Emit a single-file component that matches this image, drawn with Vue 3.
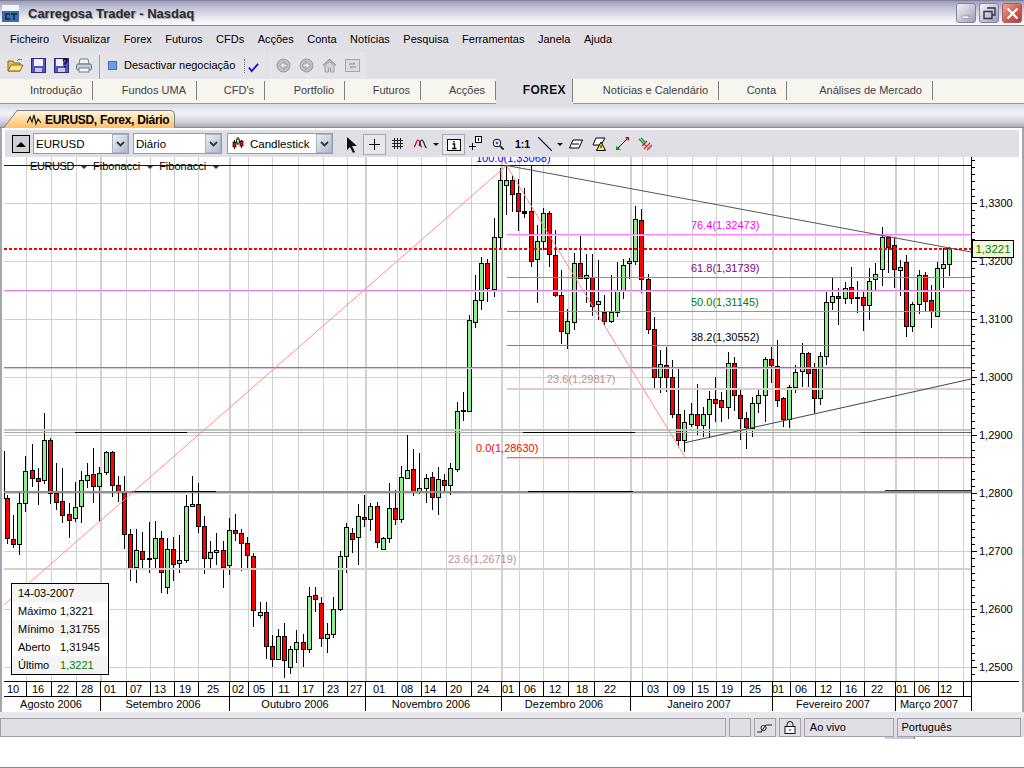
<script setup>
const menus = ['Ficheiro', 'Visualizar', 'Forex', 'Futuros', 'CFDs', 'Acções', 'Conta', 'Notícias', 'Pesquisa', 'Ferramentas', 'Janela', 'Ajuda']

const tabs = [
  { label: 'Introdução', w: 93 },
  { label: 'Fundos UMA', w: 104 },
  { label: "CFD's", w: 68 },
  { label: 'Portfolio', w: 80 },
  { label: 'Futuros', w: 76 },
  { label: 'Acções', w: 75 },
  { label: 'FOREX', w: 77, active: true },
  { label: 'Notícias e Calendário', w: 146 },
  { label: 'Conta', w: 68 },
  { label: 'Análises de Mercado', w: 146 }
]

const combos = [
  { label: 'EURUSD', w: 96 },
  { label: 'Diário', w: 89 },
  { label: 'Candlestick', w: 106, icon: true }
]

const legend = [
  { k: '14-03-2007', v: '' },
  { k: 'Máximo', v: '1,3221' },
  { k: 'Mínimo', v: '1,31755' },
  { k: 'Aberto', v: '1,31945' },
  { k: 'Último', v: '1,3221', up: true }
]

// candles read off the chart, rows are [x, high, top, bottom, low, colour]
const scale = (ox, oy, rows) => rows.map(r => [ox + r[0] / 3, oy + r[1] / 3, oy + r[2] / 3, oy + r[3] / 3, oy + r[4] / 3, r[5]])

const candles = [
  ...scale(0, 410, [
    [22, 255, 265, 385, 402, 'R'], [40, 315, 387, 403, 413, 'R'], [58, 245, 280, 403, 435, 'G'], [76, 138, 184, 280, 305, 'G'],
    [97, 102, 181, 205, 230, 'R'], [115, 175, 205, 212, 285, 'R'], [133, 10, 91, 211, 222, 'G'], [151, 85, 91, 250, 282, 'R'],
    [169, 160, 250, 275, 300, 'R'], [187, 175, 274, 316, 338, 'R'], [207, 280, 313, 331, 383, 'R'], [226, 215, 290, 325, 335, 'G'],
    [244, 183, 211, 289, 338, 'G'], [262, 160, 196, 211, 233, 'G'], [280, 115, 193, 229, 278, 'R'], [298, 170, 190, 229, 335, 'G'],
    [319, 123, 127, 187, 195, 'G'], [337, 123, 127, 226, 260, 'R'], [355, 197, 224, 243, 275, 'R'], [373, 198, 245, 373, 417, 'R'],
    [391, 358, 373, 473, 512, 'R'], [409, 358, 421, 472, 518, 'G'], [427, 366, 424, 448, 475, 'R'], [447, 335, 445, 448, 488, 'K'],
    [466, 333, 385, 445, 473, 'G'], [484, 363, 385, 487, 548, 'R'], [502, 385, 418, 532, 552, 'G'], [520, 380, 418, 463, 512, 'R'],
    [538, 375, 451, 460, 488, 'G'], [558, 255, 289, 451, 458, 'G'], [577, 198, 283, 289, 292, 'G'], [595, 220, 283, 349, 370, 'R'],
    [613, 318, 349, 445, 491, 'R'], [631, 393, 427, 445, 479, 'G'], [649, 370, 421, 427, 466, 'G'], [670, 392, 421, 472, 533, 'R'],
    [688, 325, 361, 464, 494, 'G'], [706, 313, 361, 370, 393, 'R'], [724, 358, 370, 400, 482, 'R'], [742, 380, 400, 436, 478, 'R'],
    [760, 430, 439, 601, 650, 'R'], [781, 577, 607, 616, 625, 'G'], [799, 577, 607, 709, 746, 'R'], [817, 675, 709, 748, 770, 'R'],
    [835, 658, 679, 748, 750, 'G'], [853, 640, 679, 751, 805, 'R'], [871, 708, 718, 772, 793, 'G'], [889, 660, 697, 718, 760, 'G'],
    [910, 672, 697, 718, 772, 'R'], [928, 530, 559, 718, 728, 'G'], [946, 530, 556, 568, 605, 'R'], [964, 560, 580, 684, 710, 'R'],
    [982, 640, 673, 685, 730, 'G'], [1000, 562, 598, 673, 685, 'G']
  ]),
  [340, 551, 556, 609, 611, 'G'], [346, 523, 527, 556, 573, 'G'], [352, 528, 533, 539, 553, 'R'], [358, 504, 516, 537, 565, 'G'],
  [364, 495, 517, 519, 527, 'R'], [370, 503, 506, 519, 531, 'G'], [377, 502, 506, 542, 548, 'R'], [383, 537, 538, 549, 550, 'G'],
  [389, 483, 508, 538, 543, 'G'], [395, 490, 508, 519, 525, 'R'], [401, 466, 477, 519, 523, 'G'], [407, 435, 470, 478, 479, 'G'],
  [413, 449, 469, 491, 496, 'R'], [419, 453, 488, 491, 494, 'G'], [426, 474, 478, 488, 503, 'G'], [432, 472, 477, 497, 510, 'R'],
  [438, 467, 479, 497, 515, 'G'], [444, 474, 480, 485, 492, 'R'], [450, 463, 468, 485, 495, 'G'],
  ...scale(340, 150, [
    [352, 755, 784, 958, 965, 'G'], [370, 725, 781, 784, 812, 'K'], [388, 495, 511, 784, 785, 'G'], [406, 375, 451, 517, 535, 'G'],
    [424, 320, 340, 451, 480, 'G'], [442, 328, 340, 415, 455, 'R'], [463, 205, 262, 417, 440, 'G'], [481, 55, 91, 262, 298, 'G'],
    [499, 45, 91, 106, 195, 'G'], [517, 75, 91, 133, 185, 'R'], [535, 88, 130, 184, 243, 'R'], [553, 115, 184, 188, 205, 'K'],
    [574, 45, 184, 334, 352, 'R'], [592, 225, 274, 328, 458, 'G'], [610, 175, 190, 274, 300, 'G'], [628, 183, 190, 313, 350, 'R'],
    [646, 240, 316, 436, 440, 'R'], [664, 360, 436, 544, 582, 'R'], [682, 478, 514, 550, 597, 'G'], [703, 310, 340, 517, 540, 'G'],
    [721, 258, 340, 385, 388, 'R'], [739, 313, 376, 385, 460, 'G'], [757, 312, 380, 467, 497, 'R'], [775, 330, 454, 463, 510, 'G'],
    [793, 435, 487, 514, 527, 'R'], [814, 375, 487, 514, 518, 'G'], [832, 335, 424, 487, 500, 'G'], [850, 328, 346, 424, 446, 'G'],
    [868, 325, 334, 340, 387, 'G'], [886, 168, 208, 334, 345, 'G'], [904, 178, 211, 388, 430, 'R'], [925, 372, 388, 538, 552, 'R'],
    [943, 500, 538, 682, 716, 'R'], [961, 600, 643, 680, 730, 'G'], [979, 590, 646, 682, 725, 'R'], [997, 630, 682, 793, 805, 'R'],
    [1015, 655, 793, 871, 890, 'R']
  ]),
  ...scale(660, 150, [
    [73, 780, 817, 871, 905, 'G'], [94, 758, 793, 823, 832, 'G'], [112, 703, 793, 826, 855, 'R'], [130, 770, 793, 826, 862, 'G'],
    [148, 723, 748, 793, 865, 'G'], [166, 680, 748, 760, 815, 'R'], [184, 725, 751, 772, 815, 'R'], [205, 606, 640, 772, 808, 'G'],
    [223, 620, 640, 736, 782, 'R'], [241, 715, 736, 805, 870, 'R'], [259, 785, 805, 832, 898, 'R'], [277, 740, 760, 835, 862, 'G'],
    [295, 715, 736, 760, 790, 'G'], [316, 620, 628, 736, 815, 'G'], [334, 590, 628, 646, 700, 'R'], [352, 570, 647, 751, 770, 'R'],
    [370, 742, 745, 808, 832, 'R'], [388, 705, 712, 808, 835, 'G'], [406, 645, 667, 712, 730, 'G'], [427, 580, 610, 664, 710, 'G'],
    [445, 605, 610, 670, 712, 'R'], [463, 640, 658, 745, 788, 'R'], [481, 605, 619, 745, 765, 'G'], [499, 420, 457, 619, 645, 'G'],
    [517, 385, 439, 457, 480, 'G'], [535, 415, 439, 445, 525, 'R'], [556, 395, 415, 445, 462, 'G'], [574, 352, 412, 445, 462, 'R'],
    [592, 393, 442, 445, 490, 'K'], [610, 425, 442, 466, 542, 'R'], [628, 355, 394, 466, 510, 'G'], [646, 340, 373, 388, 422, 'G'],
    [667, 232, 262, 358, 408, 'G'], [685, 258, 262, 290, 370, 'R'], [703, 265, 286, 358, 413, 'R'], [721, 330, 352, 361, 438, 'G'],
    [739, 315, 337, 529, 560, 'R'], [757, 455, 463, 529, 545, 'G'], [778, 360, 376, 463, 492, 'G'], [796, 367, 376, 454, 482, 'R'],
    [814, 405, 451, 484, 533, 'R'], [832, 335, 355, 499, 500, 'G'], [850, 295, 343, 355, 413, 'G'], [868, 292, 295, 343, 378, 'G']
  ])
].map(([x, high, top, bottom, low, c]) => ({
  x: Math.floor(x),
  high: Math.round(high),
  top: Math.round(top),
  bottom: Math.round(bottom),
  low: Math.round(low),
  fill: c === 'G' ? '#90ee90' : c === 'R' ? '#ff0000' : '#000000'
}))

const thick = [100, 229, 365, 501, 630, 772, 895]
const thin = [26, 51, 76, 126, 150, 174, 198, 248, 272, 298, 323, 347, 397, 421, 446, 471, 519, 543, 568, 594, 642, 667, 692, 716, 741, 790, 815, 840, 864, 914, 938, 963]
const dividers = [...thick, ...thin]

const priceLabels = [
  ['1,3300', 203], ['1,3200', 261], ['1,3100', 319], ['1,3000', 377], ['1,2900', 435],
  ['1,2800', 493], ['1,2700', 551], ['1,2600', 609], ['1,2500', 667]
]

const ticks = []
for (let i = -6; i <= 66; i++) {
  const y = Math.round(203 + i * 7.25)
  if (y > 158 && y < 682) ticks.push({ y, long: i % 8 === 0 })
}

const levels = [
  { y: 165, x1: 4, stroke: '#0000cc', w: 1 },
  { y: 234, x1: 507, stroke: '#ff80ff', w: 1 },
  { y: 235, x1: 507, stroke: '#ffd0ff', w: 1 },
  { y: 277, x1: 507, stroke: '#a080a0', w: 1 },
  { y: 290, x1: 4, stroke: '#e080e0', w: 1 },
  { y: 291, x1: 4, stroke: '#f4d0f4', w: 1 },
  { y: 311, x1: 507, stroke: '#80a880', w: 1 },
  { y: 345, x1: 507, stroke: '#808080', w: 1 },
  { y: 367, x1: 4, stroke: '#a070a0', w: 1 },
  { y: 368, x1: 4, stroke: '#dcc8dc', w: 1 },
  { y: 388, x1: 507, stroke: '#e0cccc', w: 2 },
  { y: 429, x1: 4, stroke: '#b8ccb8', w: 2 },
  { y: 432, x1: 4, stroke: '#a8a8a8', w: 1 },
  { y: 457, x1: 507, stroke: '#ff6060', w: 1 },
  { y: 458, x1: 507, stroke: '#ffd0d0', w: 1 },
  { y: 491, x1: 4, stroke: '#909090', w: 2 },
  { y: 568, x1: 4, stroke: '#dccccc', w: 2 }
]

const segments = [
  { y: 432, x1: 75, x2: 187 }, { y: 432, x1: 523, x2: 635 }, { y: 432, x1: 860, x2: 971, stroke: '#666666' },
  { y: 491, x1: 132, x2: 216 }, { y: 491, x1: 528, x2: 633 }, { y: 490, x1: 885, x2: 971, stroke: '#333333' }
]

const fibLabels = [
  { t: '76.4(1,32473)', x: 691, y: 229, c: '#ff00ff' },
  { t: '61.8(1,31739)', x: 691, y: 272, c: '#800080' },
  { t: '50.0(1,31145)', x: 691, y: 306, c: '#008000' },
  { t: '38.2(1,30552)', x: 691, y: 341, c: '#000000' },
  { t: '23.6(1,29817)', x: 547, y: 383, c: '#c09090' },
  { t: '0.0(1,28630)', x: 476, y: 452, c: '#ff0000' },
  { t: '23.6(1,26719)', x: 448, y: 563, c: '#c09090' }
]

const days = [
  ['10', 13], ['16', 38], ['22', 63], ['28', 87], ['01', 110], ['07', 136], ['13', 160], ['19', 185], ['25', 213],
  ['02', 238], ['05', 259], ['11', 284], ['17', 308], ['23', 333], ['27', 356], ['01', 379], ['08', 407], ['14', 430],
  ['20', 456], ['24', 483], ['01', 508], ['06', 530], ['12', 555], ['18', 582], ['22', 610], ['03', 653], ['09', 679],
  ['15', 703], ['19', 727], ['25', 755], ['01', 778], ['06', 801], ['12', 826], ['16', 851], ['22', 877], ['01', 902],
  ['06', 924], ['12', 946]
]

const months = [
  ['Agosto 2006', 51], ['Setembro 2006', 163], ['Outubro 2006', 295], ['Novembro 2006', 431],
  ['Dezembro 2006', 564], ['Janeiro 2007', 699], ['Fevereiro 2007', 833], ['Março 2007', 929]
]
</script>

<template>
  <div class="window">
    <header class="titlebar">
      <svg class="app-icon" width="17" height="17" viewBox="0 0 17 17">
        <rect x="0" y="0" width="17" height="6" fill="#f4f4f8" />
        <rect x="0" y="6" width="17" height="11" fill="#3b6ea8" />
        <path d="M8 9H4v5h4M9 9h6M12 9v6" fill="none" stroke="#12263f" stroke-width="1.4" />
      </svg>
      <span class="title-text">Carregosa Trader - Nasdaq</span>
      <div class="win-buttons">
        <button class="win-btn">
          <svg width="19" height="19" viewBox="0 0 19 19"><rect x="5" y="12" width="7" height="2.5" fill="#fff" stroke="#667" stroke-width=".5" /></svg>
        </button>
        <button class="win-btn">
          <svg width="19" height="19" viewBox="0 0 19 19"><path d="M7 4h8v7h-3M4 7.500h8v7H4z" fill="none" stroke="#334" stroke-width="1.400" /></svg>
        </button>
        <button class="win-btn close">
          <svg width="19" height="19" viewBox="0 0 19 19"><path d="M4.500 4.500l10 10M14.500 4.500l-10 10" stroke="#fff" stroke-width="2.200" /></svg>
        </button>
      </div>
    </header>

    <nav class="menubar">
      <span v-for="m in menus" :key="m">{{ m }}</span>
    </nav>

    <div class="toolbar">
      <svg class="tb-icon folder" width="17" height="15" viewBox="0 0 17 15">
        <path d="M1 3h5l1 2h6v8H1z" fill="#e8c050" stroke="#8a6a20" />
        <path d="M1 13l3-6h12l-3 6z" fill="#fbe48c" stroke="#8a6a20" />
        <path d="M10 3c1-2 3-2 5-1" fill="none" stroke="#667" />
      </svg>
      <svg class="tb-icon save" width="15" height="15" viewBox="0 0 15 15">
        <rect x=".5" y=".5" width="14" height="14" fill="#5454c4" stroke="#2a2a80" />
        <rect x="3" y="1" width="9" height="7" fill="#f2f2f8" />
        <rect x="4" y="10" width="7" height="4" fill="#c8c8dc" />
      </svg>
      <svg class="tb-icon save2" width="15" height="15" viewBox="0 0 15 15">
        <rect x=".5" y=".5" width="14" height="14" fill="#5454c4" stroke="#2a2a80" />
        <rect x="2" y="1" width="7" height="7" fill="#f2f2f8" />
        <rect x="4" y="10" width="7" height="4" fill="#c8c8dc" />
        <path d="M9 2.500c1-2 4-2 4 0 0 2-2 1.500-2 4M11 8v1.500" fill="none" stroke="#000" stroke-width="1.500" />
      </svg>
      <svg class="tb-icon print" width="16" height="15" viewBox="0 0 16 15">
        <path d="M4 1h8l1 5H3z" fill="#eef2f6" stroke="#708090" />
        <rect x=".5" y="6" width="15" height="6" rx="1.500" fill="#c0ccd8" stroke="#607080" />
        <rect x="3" y="10" width="10" height="4" fill="#f4f6f8" stroke="#708090" />
      </svg>
      <i class="tb-sep"></i>
      <i class="trade-box"></i>
      <span class="trade-text">Desactivar negociação</span>
      <i class="tb-dots"></i>
      <svg class="tb-check" width="11" height="11" viewBox="0 0 12 12">
        <path d="M1 6l3 4 7-8" fill="none" stroke="#1414d0" stroke-width="2" />
      </svg>
      <div class="nav-icons">
        <svg width="15" height="15" viewBox="0 0 15 15">
          <circle cx="7.500" cy="7.500" r="6.500" fill="#c0c0c4" stroke="#9a9aa0" />
          <path d="M8 3.500L4 7.500l4 4v-2.500h3v-3H8z" fill="#e8e8ea" stroke="#8a8a90" stroke-width=".7" />
        </svg>
        <svg width="15" height="15" viewBox="0 0 15 15">
          <circle cx="7.500" cy="7.500" r="6.500" fill="#c0c0c4" stroke="#9a9aa0" />
          <path d="M7 3.500l4 4-4 4v-2.500H4v-3h3z" fill="#e8e8ea" stroke="#8a8a90" stroke-width=".7" />
        </svg>
        <svg width="15" height="15" viewBox="0 0 15 15">
          <path d="M1 7.500L7.500 1.500 14 7.500" fill="none" stroke="#9a9aa0" stroke-width="1.400" />
          <path d="M3 7.500V14h3.500v-4h2v4H12V7.500L7.500 3.500z" fill="#d4d4d8" stroke="#9a9aa0" />
        </svg>
        <svg width="15" height="15" viewBox="0 0 15 15">
          <rect x=".5" y="1.500" width="14" height="12" fill="#dcdce0" stroke="#a4a4aa" />
          <path d="M4 6h6l-1.500-1.500M11 9H5l1.500 1.500" fill="none" stroke="#8a8a90" />
        </svg>
      </div>
    </div>

    <nav class="tabs">
      <div v-for="t in tabs" :key="t.label" class="tab" :class="{ active: t.active }" :style="{ width: t.w + 'px' }">{{ t.label }}</div>
    </nav>

    <div class="doc-strip">
      <div class="doc-tab">
        <svg width="14" height="12" viewBox="0 0 14 12"><path d="M0 9l3-6 2 5 2-7 2 9 2-5 3 4" fill="none" stroke="#222" stroke-width="1.200" /></svg>
        <span>EURUSD, Forex, Diário</span>
      </div>
    </div>

    <section class="workspace">
      <div class="chart-tools">
        <button class="up-btn"><i></i></button>
        <div v-for="c in combos" :key="c.label" class="combo" :style="{ width: c.w + 'px' }">
          <svg v-if="c.icon" class="combo-icon" width="12" height="13" viewBox="0 0 12 13">
            <path d="M2.500 3v9M6 0v8M9.500 3v8" stroke="#000" />
            <rect x="1" y="5" width="3" height="5" fill="#ff0000" stroke="#000" stroke-width=".7" />
            <rect x="4.500" y="2" width="3" height="4" fill="#90ee90" stroke="#000" stroke-width=".7" />
            <rect x="8" y="4" width="3" height="5" fill="#ff0000" stroke="#000" stroke-width=".7" />
          </svg>
          <span class="combo-text">{{ c.label }}</span>
          <span class="combo-arrow">
            <svg width="9" height="6" viewBox="0 0 9 6"><path d="M1 1l3.500 3.500L8 1" fill="none" stroke="#334" stroke-width="1.800" /></svg>
          </span>
        </div>
        <svg class="t-arrow" width="12" height="16" viewBox="0 0 12 16"><path d="M1 0v13l3-3 3 6 2-1-3-6h5z" fill="#111" /></svg>
        <span class="t-box plus">
          <svg width="11" height="11" viewBox="0 0 11 11"><path d="M5.500 0v11M0 5.500h11" stroke="#000" /></svg>
        </span>
        <svg class="t-grid" width="11" height="11" viewBox="0 0 11 11"><path d="M2.500 0v11M5.500 0v11M8.500 0v11M0 2.500h11M0 5.500h11M0 8.500h11" stroke="#222" /></svg>
        <svg class="t-wave" width="13" height="11" viewBox="0 0 13 11"><path d="M0 9c2-1 2-7 4-7s2 7 4 7" fill="none" stroke="#c00000" stroke-width="1.200" /><path d="M5 8c1-2 1-6 3-6s2 6 4.500 8" fill="none" stroke="#223" stroke-width="1.200" /></svg>
        <i class="t-drop wave-drop"></i>
        <span class="t-box info">
          <svg width="14" height="12" viewBox="0 0 14 12">
            <rect x=".5" y=".5" width="13" height="11" fill="#fff" stroke="#000" />
            <path d="M7 2v1.500M5.500 5H7.500v4M5 9.500h4.500" fill="none" stroke="#000" stroke-width="1.400" />
          </svg>
        </span>
        <svg class="t-note" width="14" height="14" viewBox="0 0 14 14">
          <path d="M4.500 7v7M1 10.500h7" stroke="#000" />
          <rect x="7.500" y=".5" width="6" height="6" fill="#fff" stroke="#000" />
          <path d="M10.500 2v3" stroke="#000" />
        </svg>
        <svg class="t-zoom" width="12" height="12" viewBox="0 0 12 12">
          <circle cx="5" cy="5" r="3.800" fill="#fff" stroke="#000" />
          <path d="M3.500 5h3M5 3.500v3" stroke="#1414d0" />
          <path d="M8 8l3.500 3.500" stroke="#000" stroke-width="1.600" />
        </svg>
        <b class="t-ratio">1:1</b>
        <svg class="t-line" width="14" height="14" viewBox="0 0 14 14"><path d="M0 0l14 14" stroke="#000" stroke-width="1.200" /></svg>
        <i class="t-drop line-drop"></i>
        <svg class="t-erase" width="14" height="10" viewBox="0 0 14 10">
          <path d="M4 1h9.500L10 9H.5z" fill="#fff" stroke="#000" />
          <path d="M3 5h7" stroke="#000" />
        </svg>
        <svg class="t-alert" width="14" height="14" viewBox="0 0 14 14">
          <path d="M4 1h9L9 8H1z" fill="#fff" stroke="#000" />
          <path d="M9 5l4.500 8.500h-9z" fill="#ffe860" stroke="#000" />
          <path d="M9 8v3" stroke="#000" />
        </svg>
        <svg class="t-arrows" width="13" height="13" viewBox="0 0 13 13">
          <path d="M2 11L11 2" stroke="#000" />
          <path d="M9 0h4v4z" fill="#e00000" />
          <path d="M0 9v4h5z" fill="#00a000" />
        </svg>
        <svg class="t-marks" width="14" height="14" viewBox="0 0 14 14">
          <path d="M1 2l4 4M3 1l4 4M4 5l4 4" stroke="#00a040" stroke-width="1.300" />
          <path d="M6 12l6-6M9 13l5-5M4 9l5-5" stroke="#e02020" stroke-width="1.300" />
        </svg>
      </div>

      <div class="chart">
        <svg class="plot" width="1020" height="555" viewBox="2 157 1020 555">
          <g shape-rendering="crispEdges">
            <rect x="2" y="157" width="1020" height="555" fill="#fff" />
            <line v-for="p in priceLabels" :key="p[0]" x1="4" :x2="971" :y1="p[1] + 0.5" :y2="p[1] + 0.5" stroke="#d0d0d0" />
            <line v-for="x in thin" :key="'t' + x" :x1="x + 0.5" :x2="x + 0.5" y1="157" y2="682" stroke="#d0d0d0" />
            <line v-for="x in thick" :key="'k' + x" :x1="x + 1" :x2="x + 1" y1="157" y2="682" stroke="#d0d0d0" stroke-width="2" />

            <g v-for="(c, i) in candles" :key="i">
              <line :x1="c.x + 0.5" :x2="c.x + 0.5" :y1="c.high" :y2="c.low" stroke="#000" />
              <rect :x="c.x - 1.5" :y="c.top + 0.5" width="4" :height="Math.max(c.bottom - c.top, 1)" :fill="c.fill" stroke="#000" />
            </g>
            <line x1="4.500" x2="4.500" y1="451" y2="498" stroke="#000" />
            <line x1="4" x2="6" y1="498.500" y2="498.500" stroke="#000" />

            <line v-for="l in levels" :key="l.y" :x1="l.x1" x2="971" :y1="l.y + 0.5" :y2="l.y + 0.5" :stroke="l.stroke" :stroke-width="l.w" />
            <line v-for="s in segments" :key="s.x1" :x1="s.x1" :x2="s.x2" :y1="s.y + 0.5" :y2="s.y + 0.5" :stroke="s.stroke || '#000'" />
            <line x1="4" x2="971" y1="249" y2="249" stroke="#ff0000" stroke-width="2" stroke-dasharray="3 2" />
          </g>

          <g fill="none">
            <path d="M4 605L506.500 165.500L685 457" stroke="#ff8c8c" />
            <path d="M506.500 165.500L971 252" stroke="#555" />
            <path d="M685 442.700L971 379" stroke="#444" />
          </g>

          <g class="chart-text">
            <text x="476" y="162" fill="#0000ff">100.0(1,33068)</text>
            <text v-for="f in fibLabels" :key="f.t + f.x" :x="f.x" :y="f.y" :fill="f.c">{{ f.t }}</text>
          </g>

          <g shape-rendering="crispEdges">
            <line x1="971.500" x2="971.500" y1="157" y2="711" stroke="#000" />
            <line v-for="t in ticks" :key="t.y" x1="972" :x2="t.long ? 977 : 975" :y1="t.y + 0.5" :y2="t.y + 0.5" stroke="#000" />
            <line x1="4" x2="1019" y1="681.500" y2="681.500" stroke="#000" />
            <line x1="4" x2="971" y1="696.500" y2="696.500" stroke="#000" />
            <line v-for="x in dividers" :key="'d' + x" :x1="x + 0.5" :x2="x + 0.5" y1="682" :y2="thick.includes(x) ? 711 : 696" stroke="#000" />
          </g>

          <g class="chart-text">
            <text v-for="p in priceLabels" :key="'p' + p[0]" x="979" :y="p[1] + 4">{{ p[0] }}</text>
            <text v-for="(d, i) in days" :key="'day' + i" :x="d[1]" y="693" text-anchor="middle">{{ d[0] }}</text>
            <text v-for="m in months" :key="m[0]" :x="m[1]" y="708" text-anchor="middle">{{ m[0] }}</text>
          </g>
        </svg>

        <div class="series">
          <span>EURUSD</span><i></i><span>Fibonacci</span><i></i><span>Fibonacci</span><i></i>
        </div>

        <div class="price-tag">1,3221</div>

        <div class="legend">
          <div v-for="r in legend" :key="r.k" class="legend-row">
            <span class="legend-key">{{ r.k }}</span>
            <span v-if="r.v" :class="{ up: r.up }">{{ r.v }}</span>
          </div>
        </div>
      </div>
    </section>

    <footer class="statusbar">
      <div class="cell grow"></div>
      <div class="cell empty"></div>
      <div class="cell icon">
        <svg width="15" height="11" viewBox="0 0 15 11"><path d="M0 10h5M4 10l5-7M9 3h6" fill="none" stroke="#222" /><circle cx="6.500" cy="6" r="2.600" fill="none" stroke="#222" /></svg>
      </div>
      <div class="cell icon">
        <svg width="12" height="13" viewBox="0 0 12 13"><rect x="1" y="5.500" width="10" height="7" fill="#fff" stroke="#111" /><path d="M3 5.500V3.500a3 3 0 0 1 6 0v2" fill="none" stroke="#111" /><path d="M6 8v2" stroke="#111" /></svg>
      </div>
      <div class="cell live">Ao vivo</div>
      <div class="cell lang">Português</div>
    </footer>
    <i class="status-nub"></i>
  </div>
</template>

<style scoped>
.window {
  position: relative;
  display: flex;
  flex-direction: column;
  width: 1024px;
  height: 768px;
  overflow: hidden;
  background: #fff;
  color: #000;
  font-family: 'Liberation Sans', Arial, sans-serif;
  font-size: 11px;
  border-bottom: 1px solid #888892;
  box-sizing: border-box;
}

.titlebar {
  display: flex;
  align-items: center;
  height: 26px;
  flex: none;
  box-sizing: border-box;
  border-top: 1px solid #80809c;
  border-bottom: 1px solid #8c8c94;
  background: linear-gradient(#9e9eba, #c4c4d8 30%, #eeeef4 75%, #fbfbfd);
}

.app-icon {
  margin-left: 2px;
  flex: none;
}

.title-text {
  margin-left: 9px;
  font-size: 13px;
  font-weight: 700;
  color: #2a2a32;
  text-shadow: 1px 1px 1px #a0a0a8;
}

.win-buttons {
  display: flex;
  gap: 3px;
  margin-left: auto;
  margin-right: 2px;
}

.win-btn {
  width: 20px;
  height: 20px;
  padding: 0;
  border: 1px solid #8084a0;
  border-radius: 3px;
  background: linear-gradient(135deg, #f4f4f8, #c0c0d4 60%, #9c9cb8);
}

.win-btn.close {
  border-color: #a06060;
  background: linear-gradient(135deg, #e8a898, #d45a50 55%, #b83c38);
}

.win-btn svg {
  display: block;
  margin: 0 auto;
}

.menubar {
  display: flex;
  align-items: center;
  gap: 13.500px;
  height: 26px;
  flex: none;
  padding-left: 10px;
  padding-bottom: 1px;
  box-sizing: border-box;
  background: #dfdfe5;
}

.toolbar {
  position: relative;
  height: 27px;
  flex: none;
  background: linear-gradient(90deg, #e4e4e8 0, #e4e4e8 266px, #dfdfe5 266px, #dfdfe5 268px, #e4e4e8 268px, #e4e4e8 366px, #dfdfe5 366px);
}

.toolbar > * {
  position: absolute;
}

.folder { left: 7px; top: 6px; }
.save { left: 31px; top: 6px; }
.save2 { left: 54px; top: 6px; }
.print { left: 76px; top: 6px; }

.tb-sep {
  left: 99px;
  top: 3px;
  width: 1px;
  height: 24px;
  background: #a0a0a8;
}

.trade-box {
  left: 108px;
  top: 9px;
  width: 7px;
  height: 7px;
  border: 1px solid #4070c0;
  background: #6c9ce8;
}

.trade-text {
  left: 124px;
  top: 7px;
}

.tb-dots {
  left: 244px;
  top: 7px;
  height: 14px;
  border-left: 1px dotted #707078;
}

.tb-check {
  left: 248px;
  top: 10px;
}

.nav-icons {
  display: flex;
  gap: 8px;
  left: 276px;
  top: 6px;
}

.tabs {
  display: flex;
  align-items: stretch;
  height: 25px;
  flex: none;
  box-sizing: border-box;
  padding-bottom: 1px;
  background: #f6f6ee;
  border-bottom: 1px solid #9a9a9a;
}

.tab {
  position: relative;
  flex: none;
  box-sizing: border-box;
  padding: 5px 11px 0 0;
  text-align: right;
  color: #404048;
  font-size: 11px;
}

.tab::after {
  content: '';
  position: absolute;
  right: 0;
  top: 2px;
  bottom: 2px;
  width: 1px;
  background: #808080;
}

.tab.active {
  margin-bottom: -2px;
  padding-right: 7px;
  padding-top: 4px;
  background: #dfdfe5;
  color: #111;
  font-size: 12px;
  font-weight: 700;
  letter-spacing: 0.4px;
}

.tab.active::after {
  top: 0;
  bottom: 2px;
}

.doc-strip {
  display: flex;
  align-items: flex-end;
  height: 24px;
  flex: none;
  padding-left: 17px;
  box-sizing: border-box;
  background: linear-gradient(#d8d8e2, #f4f4f8 40%, #cfcfdc 80%, #a8a8b4);
  border-bottom: 1px solid #8c8c94;
}

.doc-tab {
  position: relative;
  display: flex;
  align-items: center;
  gap: 4px;
  width: 158px;
  height: 18px;
  margin-bottom: -1px;
  padding-left: 10px;
  box-sizing: border-box;
  border: 1px solid #808088;
  border-left: 0;
  border-bottom: 0;
  border-radius: 0 5px 0 0;
  background: linear-gradient(#fff6de, #ffbf66);
  font-size: 12px;
  font-weight: 700;
  letter-spacing: -0.3px;
  white-space: nowrap;
}

.doc-tab::before {
  content: '';
  position: absolute;
  left: -14px;
  bottom: 0;
  width: 18px;
  height: 18px;
  background: linear-gradient(#fff6de, #ffbf66);
  border-left: 1px solid #808088;
  border-top: 1px solid #808088;
  box-sizing: border-box;
  transform: skewX(-38deg);
  transform-origin: bottom left;
  z-index: 0;
}

.doc-tab > * {
  position: relative;
}

.workspace {
  flex: none;
  box-sizing: border-box;
  border-left: 2px solid #a4a4ac;
  border-right: 2px solid #a4a4ac;
  background: #fff;
}

.chart-tools {
  position: relative;
  height: 27px;
  margin: 2px 3px 0;
  background: #dfdfe5;
}

.chart-tools > * {
  position: absolute;
}

.up-btn {
  left: 7px;
  top: 5px;
  width: 18px;
  height: 18px;
  padding: 0;
  border: 1px solid #000;
  background: #d0d0d4;
}

.up-btn i {
  display: block;
  width: 0;
  margin: 0 auto;
  border-left: 5px solid transparent;
  border-right: 5px solid transparent;
  border-bottom: 5px solid #000;
}

.combo {
  top: 3px;
  display: flex;
  align-items: center;
  height: 21px;
  box-sizing: border-box;
  border: 1px solid #8ca0b4;
  background: #fff;
}

.combo:nth-of-type(1) { left: 28px; }
.combo:nth-of-type(2) { left: 128px; }
.combo:nth-of-type(3) { left: 222px; }

.combo-icon {
  margin-left: 4px;
}

.combo-text {
  margin-left: 2px;
  font-size: 11.500px;
}

.combo-icon + .combo-text {
  margin-left: 6px;
}

.combo-arrow {
  display: flex;
  align-items: center;
  justify-content: center;
  margin-left: auto;
  width: 16px;
  height: 19px;
  box-sizing: border-box;
  border: 1px solid #a8b4c4;
  background: linear-gradient(135deg, #eceef2, #b4b8c8);
}

.t-arrow { left: 341px; top: 7px; }
.t-grid { left: 387px; top: 8px; }
.t-wave { left: 409px; top: 8px; }
.t-note { left: 463px; top: 6px; }
.t-zoom { left: 487px; top: 8px; }
.t-line { left: 533px; top: 7px; }
.t-erase { left: 564px; top: 9px; }
.t-alert { left: 587px; top: 7px; }
.t-arrows { left: 611px; top: 7px; }
.t-marks { left: 633px; top: 7px; }

.t-box {
  display: flex;
  align-items: center;
  justify-content: center;
  top: 4px;
  width: 23px;
  height: 21px;
  box-sizing: border-box;
  border: 1px solid #a8a8b4;
  background: #e8e8ec;
}

.t-box.plus { left: 358px; }
.t-box.info { left: 437px; }

.t-drop {
  width: 0;
  top: 13px;
  border-left: 3px solid transparent;
  border-right: 3px solid transparent;
  border-top: 3px solid #111;
}

.wave-drop { left: 428px; }
.line-drop { left: 552px; }

.t-ratio {
  left: 510px;
  top: 8px;
  font-size: 10.500px;
}

.chart {
  position: relative;
  line-height: 0;
}

.plot {
  display: block;
}

.chart-text {
  font-size: 11px;
}

.series {
  position: absolute;
  left: 28px;
  top: 3px;
  display: flex;
  align-items: center;
  line-height: 13px;
}

.series span:first-child {
  letter-spacing: -0.4px;
}

.series i {
  width: 0;
  margin: 2px 6px 0 7px;
  border-left: 3px solid transparent;
  border-right: 3px solid transparent;
  border-top: 3px solid #333;
}

.price-tag {
  position: absolute;
  left: 970px;
  top: 83px;
  width: 42px;
  height: 18px;
  box-sizing: border-box;
  border: 1px solid #000;
  background: #f5f5dc;
  color: #008000;
  line-height: 16px;
  text-align: center;
  font-size: 11.500px;
}

.legend {
  position: absolute;
  left: 9px;
  top: 426px;
  width: 98px;
  height: 92px;
  box-sizing: border-box;
  border: 1px solid #000;
  background: #fff;
  line-height: 18px;
}

.legend-row {
  display: flex;
  height: 18px;
  padding-left: 6px;
  white-space: nowrap;
}

.legend-row:nth-child(odd) {
  background: #f4f4f4;
}

.legend-key {
  min-width: 42px;
}

.up {
  color: #008000;
}

.statusbar {
  display: flex;
  gap: 3px;
  height: 19px;
  flex: none;
  margin-top: 6px;
  padding-right: 3px;
  background: #dfdfe5;
  box-shadow: 0 -6px 0 #e8e8ec;
}

.cell {
  box-sizing: border-box;
  height: 19px;
  border: 1px solid #a0a0a8;
  line-height: 17px;
}

.cell.grow { width: 729px; }
.cell.empty { width: 22px; }
.cell.icon { width: 22px; display: flex; align-items: center; justify-content: center; }
.cell.live { width: 90px; padding-left: 5px; }
.cell.lang { width: 125px; padding-left: 4px; }

.status-nub {
  position: absolute;
  left: 885px;
  top: 737px;
  width: 29px;
  height: 2px;
  background: #c8c8dc;
  border-right: 1px solid #777;
}
</style>

<style>
body {
  margin: 0;
  background: #fff;
}
</style>
